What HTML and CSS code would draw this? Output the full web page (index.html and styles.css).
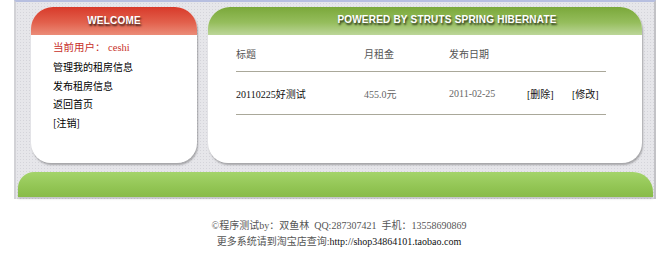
FILE: index.html
```html
<!DOCTYPE html>
<html>
<head>
<meta charset="utf-8">
<link rel="stylesheet" href="styles.css">
</head>
<body>
<div class="wrap">
  <div class="main">
    <div class="panel left">
      <div class="head red"><span>WELCOME</span></div>
      <div class="body menu">
        <div class="user">当前用户： ceshi</div>
        <div>管理我的租房信息</div>
        <div>发布租房信息</div>
        <div>返回首页</div>
        <div>[注销]</div>
      </div>
    </div>
    <div class="panel right">
      <div class="head green"><span>POWERED BY STRUTS SPRING HIBERNATE</span></div>
      <div class="body">
        <div class="table">
          <div class="row th">
            <span class="c1">标题</span><span class="c2">月租金</span><span class="c3">发布日期</span>
          </div>
          <div class="row td">
            <span class="c1 dark">20110225好测试</span><span class="c2">455.0元</span><span class="c3">2011-02-25</span><span class="c4 dark">[删除]</span><span class="c5 dark">[修改]</span>
          </div>
        </div>
      </div>
    </div>
  </div>
  <div class="bar"></div>
</div>
<div class="foot">
  <p>©程序测试by：双鱼林&nbsp; QQ:287307421&nbsp; 手机：13558690869</p>
  <p>更多系统请到淘宝店查询:<span class="url">http://shop34864101.taobao.com</span></p>
</div>
</body>
</html>
```
FILE: styles.css
```css
html, body { margin: 0; padding: 0; background: #fff; }
body { font-family: "Liberation Serif", "Noto Sans CJK SC", serif; font-size: 10px; color: #000; }

.wrap {
  margin-left: 14px;
  width: 638px;
  border-top: 2px solid #b7bfe0;
  border-left: 2px solid #d2d2d6;
  border-right: 2px solid #c2c2c6;
  background-color: #e6e6ea;
  background-image: radial-gradient(circle, #d4d4da 0.8px, transparent 1px);
  background-size: 3px 3px;
  padding-top: 5px;
  padding-bottom: 2px;
}

.main { display: flex; gap: 11px; padding-left: 15px; }

.panel {
  height: 156px;
  border-radius: 22px 22px 20px 20px;
  background: #fff;
  box-shadow: 1px 2px 2px rgba(0,0,0,0.28);
  display: flex;
  flex-direction: column;
  overflow: hidden;
}
.left { width: 166px; }
.right { width: 434px; }

.head {
  height: 28px;
  display: flex;
  align-items: center;
  justify-content: center;
  font-family: "Liberation Sans", sans-serif;
  font-weight: bold;
  font-size: 10px;
  letter-spacing: 0.2px;
  color: #fff;
  text-shadow: 1px 2px 2px rgba(0,0,0,0.75);
}
.head span { margin-top: -1px; }
.red { background: linear-gradient(#d83a2a, #e2604c 55%, #eb8c78); }
.green { background: linear-gradient(#7aa83a, #95bd5c 55%, #bcd699); padding-left: 44px; }
.green span { margin-top: -4px; }

.menu { padding: 4px 0 0 22px; }
.menu div { height: 18.75px; line-height: 18.75px; font-family: "Noto Sans CJK SC", sans-serif; font-size: 10px; }
.menu .user { color: #c8302a; font-family: "Liberation Serif", "Noto Sans CJK SC", serif; font-size: 10.5px; }

.table { margin: 0 0 0 28px; width: 370px; }
.row { display: flex; align-items: center; border-bottom: 1px solid #aaa89a; }
.th { height: 36px; color: #555; }
.td { height: 42px; color: #666; }
.row span { display: block; }
.c1 { width: 128px; }
.c2 { width: 85px; }
.c3 { width: 78px; }
.c4 { width: 45px; }
.dark { color: #111; }

.bar {
  margin: 9px 1px 0 2px;
  height: 25px;
  border-radius: 16px 20px 0 0;
  background: linear-gradient(#a4d46a, #92c554 60%, #88bb48);
  box-shadow: 0 2px 2px rgba(0,0,0,0.15);
}

.foot { text-align: center; color: #555; font-size: 10px; padding-top: 19px; padding-left: 8px; }
.foot p { margin: 0; line-height: 16px; }
.foot .url { color: #111; }
```
